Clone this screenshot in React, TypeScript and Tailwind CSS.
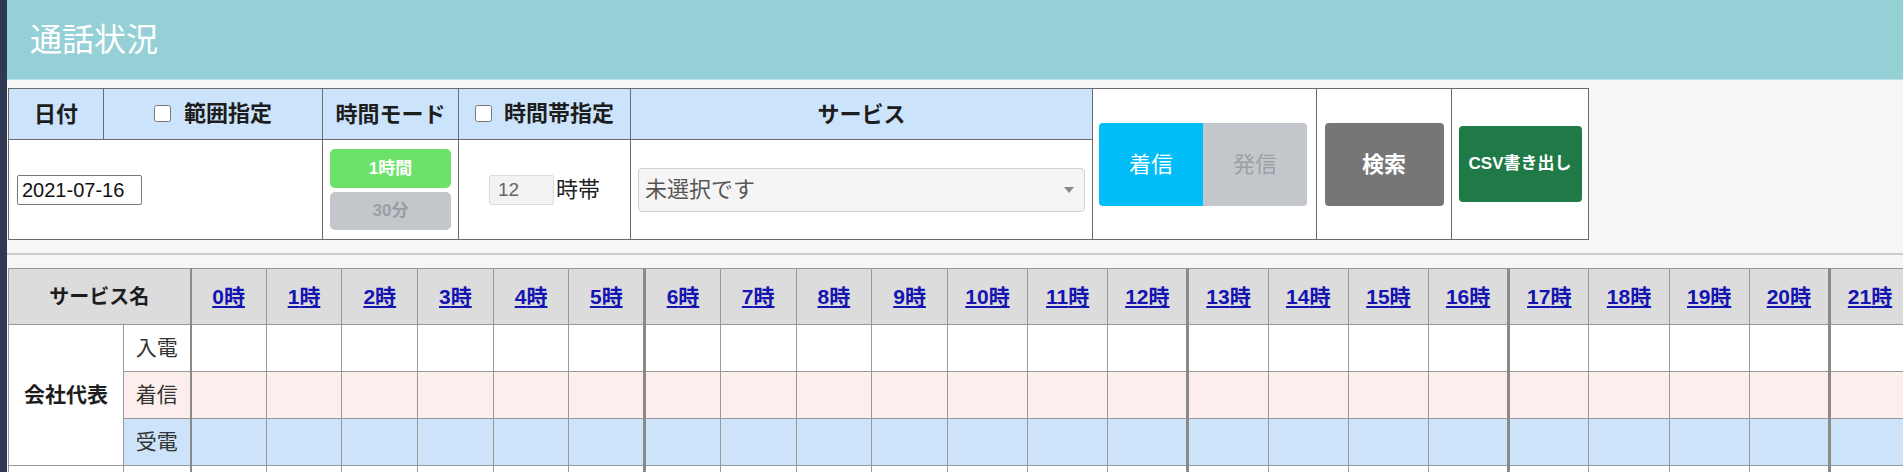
const hours = Array.from({ length: 24 }, (_, i) => i);
// Time-band boundaries get a heavier rule.
const bandStarts = new Set([6, 13, 17, 21]);

const callRows = [
  { label: '入電', bg: 'bg-white' },
  { label: '着信', bg: 'bg-[#fdeeee]' },
  { label: '受電', bg: 'bg-[#cce3f9]' },
];

const services = ['会社代表', 'サポート'];

const headCell =
  'border border-[#6b6b6b] bg-[#cce4fb] text-center text-[22px] font-bold text-[#1d1d1d]';
const bodyCell = 'border border-[#6b6b6b] bg-white';

function hourCol(h: number) {
  return h < 10 ? 'w-[75.7px]' : 'w-[80.2px]';
}

function bandBorder(h: number) {
  if (bandStarts.has(h)) return 'border-l-[3px] border-l-[#8a8a8a]';
  if (h === 0) return 'border-l-2 border-l-[#8a8a8a]';
  return '';
}

function FilterPanel() {
  return (
    <table className="ml-px table-fixed border-collapse w-[1580px]">
      <colgroup>
        <col className="w-[95px]" />
        <col className="w-[219px]" />
        <col className="w-[136px]" />
        <col className="w-[172px]" />
        <col className="w-[462px]" />
        <col className="w-[224px]" />
        <col className="w-[135px]" />
        <col className="w-[137px]" />
      </colgroup>
      <tbody>
        <tr className="h-[51px]">
          <th className={headCell}>日付</th>
          <th className={headCell}>
            <label className="inline-flex items-center gap-[13px]">
              <input type="checkbox" className="h-[17px] w-[17px]" />
              範囲指定
            </label>
          </th>
          <th className={headCell}>時間モード</th>
          <th className={headCell}>
            <label className="inline-flex items-center gap-[12px]">
              <input type="checkbox" className="h-[17px] w-[17px]" />
              時間帯指定
            </label>
          </th>
          <th className={headCell}>サービス</th>
          <td rowSpan={2} className={bodyCell}>
            <div className="flex px-[6px]">
              <button
                type="button"
                className="h-[83px] w-[104px] rounded-l-[4px] bg-[#00bdf7] text-[22px] text-white"
              >
                着信
              </button>
              <button
                type="button"
                className="h-[83px] w-[104px] rounded-r-[4px] bg-[#c3c7cc] text-[22px] text-[#9ca0a5]"
              >
                発信
              </button>
            </div>
          </td>
          <td rowSpan={2} className={bodyCell}>
            <div className="flex justify-center">
              <button
                type="button"
                className="h-[83px] w-[119px] rounded-[4px] bg-[#767676] text-[22px] font-bold text-white"
              >
                検索
              </button>
            </div>
          </td>
          <td rowSpan={2} className={bodyCell}>
            <div className="flex justify-center">
              <button
                type="button"
                className="h-[76px] w-[123px] rounded-[4px] bg-[#1f7a47] text-[17px] font-bold text-white"
              >
                CSV書き出し
              </button>
            </div>
          </td>
        </tr>
        <tr className="h-[100px]">
          <td colSpan={2} className={bodyCell}>
            <input
              type="text"
              readOnly
              value="2021-07-16"
              className="ml-[8px] h-[30px] w-[125px] rounded-[2px] border border-[#767676] bg-white px-[4px] text-[20px] text-[#111]"
            />
          </td>
          <td className={bodyCell}>
            <div className="flex flex-col gap-[4px] px-[7px]">
              <button
                type="button"
                className="h-[39px] rounded-[5px] bg-[#6ce26a] text-[17px] font-bold text-white"
              >
                1時間
              </button>
              <button
                type="button"
                className="h-[38px] rounded-[5px] bg-[#c3c7cc] text-[17px] font-bold text-[#9a9ea3]"
              >
                30分
              </button>
            </div>
          </td>
          <td className={bodyCell}>
            <div className="flex items-center justify-center gap-[2px]">
              <input
                type="text"
                readOnly
                value="12"
                className="h-[30px] w-[65px] rounded-[2px] border border-[#dadada] bg-[#f2f2f2] px-[8px] text-[19px] text-[#666]"
              />
              <span className="text-[22px] text-[#222]">時帯</span>
            </div>
          </td>
          <td className={bodyCell}>
            <div className="mx-[7px] flex h-[44px] items-center justify-between rounded-[4px] border border-[#cfcfcf] bg-[#f5f5f5] pl-[6px] pr-[10px]">
              <span className="text-[22px] text-[#555]">未選択です</span>
              <svg width="10" height="6" viewBox="0 0 10 6">
                <path d="M0 0h10L5 6z" fill="#888" />
              </svg>
            </div>
          </td>
        </tr>
      </tbody>
    </table>
  );
}

function HourlyTable() {
  return (
    <div className="overflow-hidden">
      <table className="ml-px table-fixed border-collapse w-[2062px]">
        <colgroup>
          <col className="w-[115px]" />
          <col className="w-[67px]" />
          {hours.map((h) => (
            <col key={h} className={hourCol(h)} />
          ))}
        </colgroup>
        <thead>
          <tr className="h-[56px] bg-[#dcdcdc]">
            <th
              colSpan={2}
              className="border border-[#999] text-[20px] font-bold text-[#1d1d1d]"
            >
              サービス名
            </th>
            {hours.map((h) => (
              <th key={h} className={`border border-[#999] ${bandBorder(h)}`}>
                <a
                  href="#"
                  className="text-[21px] font-bold text-[#1414b0] underline underline-offset-2"
                >
                  {h}時
                </a>
              </th>
            ))}
          </tr>
        </thead>
        <tbody>
          {services.map((name) =>
            callRows.map((row, i) => (
              <tr key={name + row.label} className={`h-[47px] ${row.bg}`}>
                {i === 0 && (
                  <td
                    rowSpan={3}
                    className="border border-[#999] bg-white text-center text-[21px] font-bold text-[#1d1d1d]"
                  >
                    {name}
                  </td>
                )}
                <td className="border border-[#999] text-center text-[21px] text-[#333]">
                  {row.label}
                </td>
                {hours.map((h) => (
                  <td key={h} className={`border border-[#999] ${bandBorder(h)}`} />
                ))}
              </tr>
            )),
          )}
        </tbody>
      </table>
    </div>
  );
}

export default function App() {
  return (
    <div className="flex min-h-screen font-['Liberation_Sans','Noto_Sans_CJK_JP',sans-serif]">
      <div className="w-[7px] shrink-0 bg-[#2f3a52]" />
      <main className="min-w-0 flex-1 bg-[#f6f6f6]">
        <header className="flex h-[80px] items-center border-b border-[#b8e2e7] bg-[#95d0d7] pl-[23px]">
          <h1 className="text-[32px] text-white">通話状況</h1>
        </header>

        {/* Search conditions */}
        <div className="pt-[8px]">
          <FilterPanel />
        </div>

        <hr className="mt-[13px] mb-[13px] border-t-2 border-[#cdcdcd]" />

        {/* Hourly counts */}
        <HourlyTable />
      </main>
    </div>
  );
}
